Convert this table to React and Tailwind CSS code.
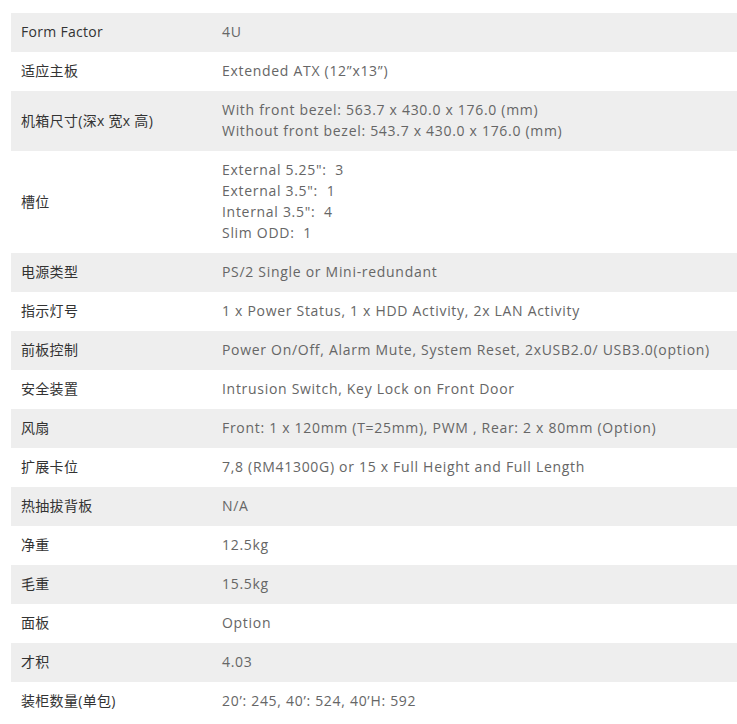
import React from "react";

const rows = [
  ["Form Factor", ["4U"]],
  ["适应主板", ["Extended ATX (12”x13”)"]],
  ["机箱尺寸(深x 宽x 高)", ["With front bezel: 563.7 x 430.0 x 176.0 (mm)", "Without front bezel: 543.7 x 430.0 x 176.0 (mm)"]],
  ["槽位", ["External 5.25\":  3", "External 3.5\":  1", "Internal 3.5\":  4", "Slim ODD:  1"]],
  ["电源类型", ["PS/2 Single or Mini-redundant"]],
  ["指示灯号", ["1 x Power Status, 1 x HDD Activity, 2x LAN Activity"]],
  ["前板控制", ["Power On/Off, Alarm Mute, System Reset, 2xUSB2.0/ USB3.0(option)"]],
  ["安全装置", ["Intrusion Switch, Key Lock on Front Door"]],
  ["风扇", ["Front: 1 x 120mm (T=25mm), PWM , Rear: 2 x 80mm (Option)"]],
  ["扩展卡位", ["7,8 (RM41300G) or 15 x Full Height and Full Length"]],
  ["热抽拔背板", ["N/A"]],
  ["净重", ["12.5kg"]],
  ["毛重", ["15.5kg"]],
  ["面板", ["Option"]],
  ["才积", ["4.03"]],
  ["装柜数量(单包)", ["20’: 245, 40’: 524, 40’H: 592"]],
];

export default function App() {
  return (
    <div className="bg-white w-[737px] pt-[13px] pl-[11px]">
      <div className="flex flex-col text-[14px] leading-[21px] font-['Open_Sans','Noto_Sans_CJK_SC',sans-serif]">
        {rows.map(([k, v], i) => (
          <div key={i} className={`flex items-center pt-[8px] pb-[10px] ${i % 2 === 0 ? "bg-[#eeeeee]" : "bg-white"}`}>
            <div className="w-[211px] shrink-0 pl-[10px] text-[#333333] tracking-[0.3px]">{k}</div>
            <div className="flex flex-col text-[#666666] whitespace-pre tracking-[0.7px]">
              {v.map((line, j) => (
                <div key={j}>{line}</div>
              ))}
            </div>
          </div>
        ))}
      </div>
    </div>
  );
}
